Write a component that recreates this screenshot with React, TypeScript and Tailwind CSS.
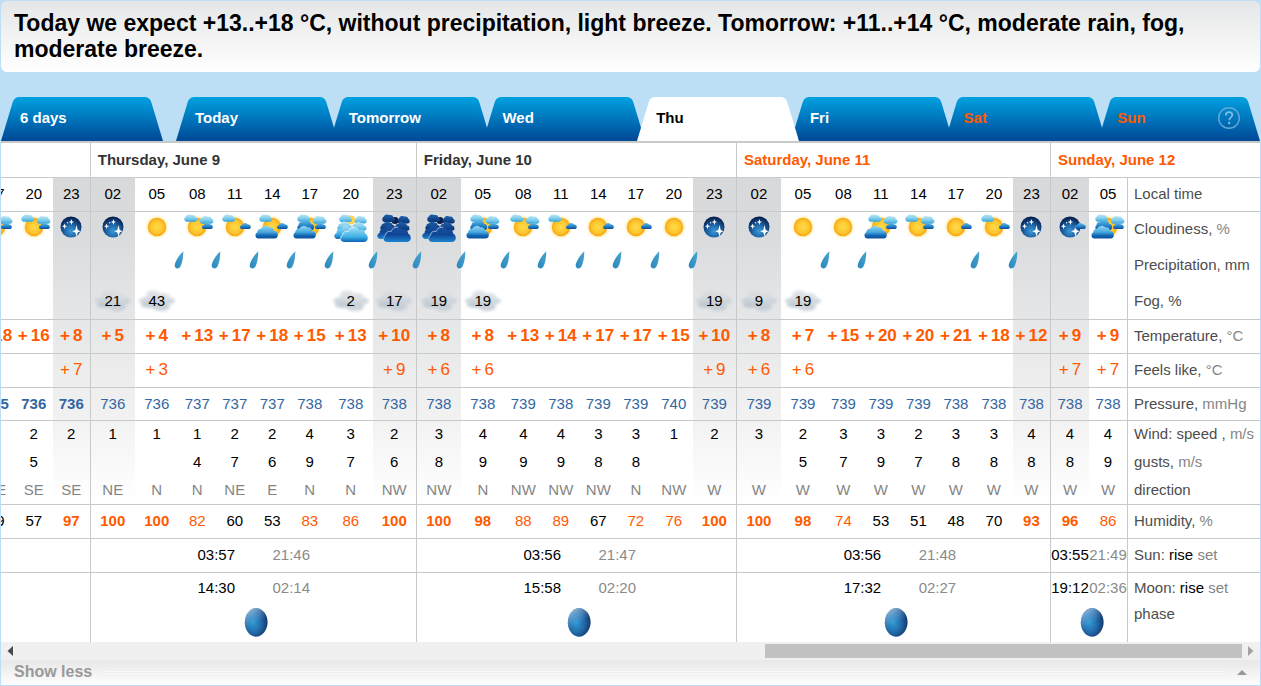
import React from "react";

type Sky =
  | "sun" | "sunD" | "sunLD" | "sunLRD" | "bigLD" | "bigLRD" | "bigAll"
  | "overcast" | "overcastNight" | "night" | "nightD";

type Hour = {
  time: string;
  sky: Sky;
  rain?: boolean;
  fog?: string;
  temp: string;
  feels?: string;
  pressure: string;
  pressureBold?: boolean;
  wind: string;
  gust?: string;
  dir: string;
  hum: string;
  dayStart?: boolean;
};

const h = (
  time: string, sky: Sky, rain: number, fog: string, temp: string, feels: string,
  pressure: string, wind: string, gust: string, dir: string, hum: string, extra: Partial<Hour> = {},
): Hour => ({ time, sky, rain: rain === 1, fog, temp, feels, pressure, wind, gust, dir, hum, ...extra });

const start = { dayStart: true };
const boldPressure = { pressureBold: true };

const hours: Hour[] = [
  h("17", "sunLRD", 0, "", "18", "", "735", "2", "6", "SE", "59", boldPressure),
  h("20", "sunLRD", 0, "", "16", "", "736", "2", "5", "SE", "57", boldPressure),
  h("23", "night", 0, "", "8", "7", "736", "2", "", "SE", "97", boldPressure),
  h("02", "night", 0, "21", "5", "", "736", "1", "", "NE", "100", start),
  h("05", "sun", 0, "43", "4", "3", "736", "1", "", "N", "100"),
  h("08", "sunLRD", 1, "", "13", "", "737", "1", "4", "N", "82"),
  h("11", "sunLD", 1, "", "17", "", "737", "2", "7", "NE", "60"),
  h("14", "bigLD", 1, "", "18", "", "737", "2", "6", "E", "53"),
  h("17", "bigAll", 1, "", "15", "", "738", "4", "9", "N", "83"),
  h("20", "overcast", 1, "2", "13", "", "738", "3", "7", "N", "86"),
  h("23", "overcastNight", 1, "17", "10", "9", "738", "2", "6", "NW", "100"),
  h("02", "overcastNight", 1, "19", "8", "6", "738", "3", "8", "NW", "100", start),
  h("05", "bigAll", 1, "19", "8", "6", "738", "4", "9", "N", "98"),
  h("08", "sunLRD", 1, "", "13", "", "739", "4", "9", "NW", "88"),
  h("11", "sunLD", 1, "", "14", "", "738", "4", "9", "NW", "89"),
  h("14", "sunD", 1, "", "17", "", "739", "3", "8", "NW", "67"),
  h("17", "sunD", 1, "", "17", "", "739", "3", "8", "N", "72"),
  h("20", "sun", 1, "", "15", "", "740", "1", "", "NW", "76"),
  h("23", "night", 1, "19", "10", "9", "739", "2", "", "W", "100"),
  h("02", "night", 0, "9", "8", "6", "739", "3", "", "W", "100", start),
  h("05", "sun", 0, "19", "7", "6", "739", "2", "5", "W", "98"),
  h("08", "sun", 1, "", "15", "", "739", "3", "7", "W", "74"),
  h("11", "bigLRD", 1, "", "20", "", "739", "3", "9", "W", "53"),
  h("14", "sunLRD", 0, "", "20", "", "739", "2", "7", "W", "51"),
  h("17", "sunD", 0, "", "21", "", "738", "3", "8", "W", "48"),
  h("20", "sunLD", 1, "", "18", "", "738", "3", "8", "W", "70"),
  h("23", "night", 1, "", "12", "", "738", "4", "8", "W", "93"),
  h("02", "nightD", 0, "", "9", "7", "738", "4", "8", "W", "96", start),
  h("05", "bigAll", 0, "", "9", "7", "738", "4", "9", "W", "86"),
];

const NIGHT =
  "bg-[linear-gradient(to_bottom,transparent_34px,#d8d9da_34px,#dadbdc_90px,#e6e7e8_180px,#f1f1f1_270px,#ffffff_358px)]";

const colWidths = [
  "w-[37px]", "w-[38px]", "w-[37px]",
  "w-[45px]", "w-[44px]", "w-[37px]", "w-[38px]", "w-[37px]", "w-[38px]", "w-[44px]", "w-[43px]",
  "w-[45px]", "w-[44px]", "w-[37px]", "w-[38px]", "w-[37px]", "w-[38px]", "w-[38px]", "w-[43px]",
  "w-[45px]", "w-[44px]", "w-[37px]", "w-[38px]", "w-[37px]", "w-[38px]", "w-[38px]", "w-[37px]",
  "w-[39px]", "w-[38px]",
];

function Defs() {
  return (
    <svg width="0" height="0" className="absolute" aria-hidden="true">
      <defs>
        <radialGradient id="sun" cx="0.5" cy="0.5" r="0.55">
          <stop offset="0" stopColor="#ffdc4a" />
          <stop offset="0.6" stopColor="#fdc52c" />
          <stop offset="1" stopColor="#f59a12" />
        </radialGradient>
        <radialGradient id="glow">
          <stop offset="0.65" stopColor="#ffe27a" stopOpacity="0.9" />
          <stop offset="1" stopColor="#fff3b8" stopOpacity="0" />
        </radialGradient>
        <radialGradient id="moonNight" cx="0.5" cy="0.7" r="0.65">
          <stop offset="0" stopColor="#3a9ad6" />
          <stop offset="0.5" stopColor="#1d62a4" />
          <stop offset="1" stopColor="#07204f" />
        </radialGradient>
        <linearGradient id="light" x1="0" y1="0" x2="0" y2="1">
          <stop offset="0" stopColor="#b9e6f6" />
          <stop offset="0.55" stopColor="#7fcdec" />
          <stop offset="1" stopColor="#37a5da" />
        </linearGradient>
        <linearGradient id="blue" x1="0" y1="0" x2="0" y2="1">
          <stop offset="0" stopColor="#5eb9e8" />
          <stop offset="0.45" stopColor="#2f8fd0" />
          <stop offset="1" stopColor="#0b4c9e" />
        </linearGradient>
        <linearGradient id="big" x1="0" y1="0" x2="0" y2="1">
          <stop offset="0" stopColor="#8fd6f3" />
          <stop offset="0.5" stopColor="#45a7de" />
          <stop offset="0.75" stopColor="#1468b4" />
          <stop offset="1" stopColor="#0d4f9c" />
        </linearGradient>
        <linearGradient id="overFront" x1="0" y1="0" x2="0" y2="1">
          <stop offset="0" stopColor="#a5e0f7" />
          <stop offset="0.65" stopColor="#3fb0e6" />
          <stop offset="1" stopColor="#0b62b4" />
        </linearGradient>
        <linearGradient id="dark" x1="0" y1="0" x2="0" y2="1">
          <stop offset="0" stopColor="#1a52a0" />
          <stop offset="0.5" stopColor="#0f4594" />
          <stop offset="1" stopColor="#1c84cf" />
        </linearGradient>
        <linearGradient id="darkBack" x1="0" y1="0" x2="0" y2="1">
          <stop offset="0" stopColor="#1c62ae" />
          <stop offset="1" stopColor="#0b3272" />
        </linearGradient>
        <linearGradient id="drop" x1="1" y1="0" x2="0" y2="1">
          <stop offset="0" stopColor="#4aa5d2" />
          <stop offset="1" stopColor="#2b87bd" />
        </linearGradient>
        <linearGradient id="tabBlue" x1="0" y1="0" x2="0" y2="1">
          <stop offset="0" stopColor="#00a2e1" />
          <stop offset="1" stopColor="#004896" />
        </linearGradient>
        <radialGradient id="phase" cx="0.38" cy="0.52" r="0.62">
          <stop offset="0" stopColor="#2b98d4" />
          <stop offset="0.55" stopColor="#2369a8" />
          <stop offset="1" stopColor="#12386f" />
        </radialGradient>
        <linearGradient id="phaseShine" x1="0.1" y1="0" x2="0.4" y2="0.6">
          <stop offset="0" stopColor="#c4e6fb" stopOpacity="0.85" />
          <stop offset="1" stopColor="#7ab4e0" stopOpacity="0" />
        </linearGradient>
        <filter id="soft" x="-20%" y="-40%" width="140%" height="180%">
          <feGaussianBlur stdDeviation="1.6" />
        </filter>
      </defs>
    </svg>
  );
}

const puff = "M3 9 A3.4 3.4 0 0 1 2.6 2.8 A4 3.4 0 0 1 8.8 1.2 A3.6 3 0 0 1 13.2 3.6 A2.8 2.8 0 0 1 12.6 9 Z";
const flat = "M1.8 7 A1.9 1.9 0 0 1 2 3.2 A3.6 3.4 0 0 1 8.4 2.6 A2.4 2.4 0 0 1 10.2 7 Z";
const large =
  "M3 14 A3.2 3.4 0 0 1 2.2 7.6 A3.4 3.4 0 0 1 6 4.2 A5.2 4.8 0 0 1 14.6 2.8 A4 4 0 0 1 19 6.4 A3.6 3.8 0 0 1 19.4 14 Z";
const bank =
  "M-6.5 14 C-11 14 -11.6 8.8 -8.4 7 C-8.2 4 -5.2 2.6 -3 3.6 C-1.4 -1.4 5.6 -2.6 8.4 2 C11.4 0.4 14.4 2.4 14 5.6 C18 7.2 17.6 14 13.4 14 Z";
const bankLeft =
  "M-13.4 11 C-17.4 10.6 -17.8 6.2 -14.4 5 C-14.6 1.6 -11.6 0.4 -9.6 1 C-8.6 -3.2 -2.4 -3.6 -0.6 0 L-4 9 L-9 10.6 Z";

function Sun() {
  return (
    <>
      <circle cx="0" cy="-1" r="12.5" fill="url(#glow)" />
      <circle cx="0" cy="-1" r="9.2" fill="url(#sun)" />
    </>
  );
}

function NightDisc() {
  return (
    <>
      <circle cx="0" cy="-1" r="10.5" fill="url(#moonNight)" />
      <path
        d="M5.5 -3 L6.7 2 L9.6 3.2 L6.7 4.4 L5.5 8.6 L4.3 4.4 L1.2 3.2 L4.3 2 Z M-6.5 -4.6 L-5.8 -2.4 L-3.8 -1.7 L-5.8 -1 L-6.5 1.2 L-7.2 -1 L-9 -1.7 L-7.2 -2.4 Z M0.4 -9 L1.1 -6.7 L3 -6 L1.1 -5.3 L0.4 -3 L-0.3 -5.3 L-2.2 -6 L-0.3 -6.7 Z"
        fill="#fff"
      />
      <circle cx="-3.4" cy="-5.2" r="0.8" fill="#d7ecff" />
    </>
  );
}

function Overcast({ dark }: { dark?: boolean }) {
  const back = dark ? "url(#darkBack)" : "url(#light)";
  const front = dark ? "url(#dark)" : "url(#overFront)";
  const edge = dark ? "#a9c4e4" : "#e6f7fd";
  return (
    <>
      {dark ? <circle cx="1" cy="-7.5" r="3.5" fill="#0a1f4c" /> : <circle cx="0" cy="-8" r="4.5" fill="#ffd34d" />}
      <path d={puff} transform="translate(-12.5 -14) scale(0.9)" fill={back} />
      <path d={puff} transform="translate(3 -12.5) scale(0.85 0.9)" fill={back} />
      <path d={large} transform="translate(-14 -7.5) scale(0.66 0.7)" fill={back} />
      <path d={large} transform="translate(0 -7) scale(0.68 0.7)" fill={back} />
      <path d={bankLeft} fill={front} />
      <path d={bank} fill={front} />
      <path
        d="M-10 10.4 C-10.2 8.8 -9.6 7.6 -8.4 7 C-8.2 4 -5.2 2.6 -3 3.6 C-1.6 0 1.4 -1 4 -0.8"
        fill="none"
        stroke={edge}
        strokeWidth="0.9"
      />
    </>
  );
}

function SkyIcon({ sky }: { sky: Sky }) {
  const left = ["sunLD", "sunLRD", "bigLD", "bigLRD", "bigAll"].includes(sky);
  const right = ["sunLRD", "bigLRD", "bigAll"].includes(sky);
  const big = sky.startsWith("big");
  const dusk = ["sunD", "sunLD", "sunLRD", "nightD"].includes(sky) || big;
  const overcast = sky.startsWith("overcast");
  return (
    <svg viewBox="-18 -15 36 32" className="mx-auto block h-8 w-9 overflow-visible" role="img" aria-label={sky}>
      {overcast ? (
        <Overcast dark={sky === "overcastNight"} />
      ) : (
        <>
          {sky.startsWith("night") ? <NightDisc /> : <Sun />}
          {left && <path d={puff} transform="translate(-13.5 -14) scale(0.92 0.85)" fill="url(#light)" />}
          {right && <path d={puff} transform="translate(2 -12.4) scale(0.96 0.9)" fill="url(#light)" />}
          {sky === "bigAll" && <path d={large} transform="translate(-13 -9) scale(0.75 0.8)" fill="url(#blue)" />}
          {dusk && <path d={flat} transform="translate(5 -6) scale(0.95 1)" fill="url(#blue)" />}
          {big && <path d={large} transform="translate(-17 -3.4)" fill="url(#big)" />}
        </>
      )}
    </svg>
  );
}

function Drop() {
  return (
    <svg viewBox="0 0 10 18" className="absolute top-[5px] -left-[5px] z-10 h-[18px] w-2.5" role="img" aria-label="rain">
      <path d="M9.2 0.3 C9.4 5 8.6 11.5 6.6 15.2 C5.2 17.8 1.6 18.3 0.8 15.6 C0 12.4 4.6 4.6 9.2 0.3 Z" fill="url(#drop)" />
    </svg>
  );
}

function Fog() {
  return (
    <svg viewBox="0 0 38 26" className="absolute inset-x-0 top-1 mx-auto h-[26px] w-[38px] overflow-visible" aria-hidden="true">
      <g filter="url(#soft)" opacity="0.85">
        <ellipse cx="19" cy="13" rx="18" ry="5" fill="#c8d0d7" />
        <ellipse cx="15" cy="7" rx="7" ry="4.5" fill="#d6dbe0" />
        <ellipse cx="25" cy="9" rx="7" ry="4" fill="#d6dbe0" />
        <ellipse cx="11" cy="17" rx="8" ry="3" fill="#bac5ce" />
        <ellipse cx="23" cy="19" rx="9" ry="4" fill="#c2cbd3" />
      </g>
    </svg>
  );
}

function Moon() {
  const shape = "M17.5 1 C25 1.2 29.6 8 29.6 15.2 C29.6 22.6 24.6 29.6 17.8 29.8 C11 29 6.8 22.6 6.8 15.4 C6.8 8.2 11.4 1.6 17.5 1 Z";
  return (
    <svg viewBox="0 0 30 31" className="mx-auto block h-[31px] w-[30px]" role="img" aria-label="waxing moon">
      <path d={shape} fill="url(#phase)" />
      <path d={shape} fill="url(#phaseShine)" />
    </svg>
  );
}

const tabs = [
  { name: "Today", tone: "text-white" },
  { name: "Tomorrow", tone: "text-white" },
  { name: "Wed", tone: "text-white" },
  { name: "Thu", tone: "text-black", active: true },
  { name: "Fri", tone: "text-white" },
  { name: "Sat", tone: "text-[#ff5a00]" },
  { name: "Sun", tone: "text-[#ff5a00]", help: true },
];

function Tab({ name, tone, active, help, size }: { name: string; tone: string; active?: boolean; help?: boolean; size: string }) {
  const fill = active ? "#fff" : "url(#tabBlue)";
  const middle = active ? "bg-white" : "bg-linear-to-b from-[#00a2e1] to-[#004896]";
  return (
    <button type="button" role="tab" aria-selected={!!active} className={`${size} ${tone} ${active ? "relative z-10" : ""} flex h-11 text-left text-[15px] leading-5 font-bold`}>
      <svg viewBox="0 0 19 44" className="h-11 w-[19px] shrink-0" aria-hidden="true">
        <path d="M0 44 L11.6 5.5 C13 1.2 15.6 0 19 0 L19 44 Z" fill={fill} />
      </svg>
      <span className={`${middle} flex h-11 flex-1 items-center justify-between pb-0.5`}>
        {name}
        {help && (
          <svg viewBox="0 0 24 24" className="size-6" role="img" aria-label="help">
            <circle cx="12" cy="12" r="10.3" fill="none" stroke="#62a9d6" strokeWidth="1.4" />
            <path d="M8.9 9.4 C8.9 7.3 10.2 6.2 12.1 6.2 C14 6.2 15.3 7.3 15.3 9 C15.3 11.4 12.2 11.5 12.2 14.2" fill="none" stroke="#7dbbe2" strokeWidth="1.8" />
            <circle cx="12.2" cy="17" r="1.2" fill="#7dbbe2" />
          </svg>
        )}
      </span>
      <svg viewBox="0 0 19 44" className="h-11 w-[19px] shrink-0" aria-hidden="true">
        <path d="M19 44 L7.4 5.5 C6 1.2 3.4 0 0 0 L0 44 Z" fill={fill} />
      </svg>
    </button>
  );
}

const LINE = "border-t border-t-[#c8c9ca]";
const side = (on?: boolean) => (on ? "border-l border-l-[#c8c9ca]" : "");

function Label({ children, height, line = true }: { children: React.ReactNode; height: string; line?: boolean }) {
  return (
    <th scope="row" className={`${height} ${line ? LINE : ""} border-l border-l-[#c8c9ca] p-0 pb-px pl-1.5 text-left font-normal whitespace-nowrap text-[#4d4d4d]`}>
      {children}
    </th>
  );
}

function Row({ label, height, line = true, tone = "text-black", cell }: {
  label: React.ReactNode;
  height: string;
  line?: boolean;
  tone?: string;
  cell: (hour: Hour) => React.ReactNode;
}) {
  return (
    <tr>
      {hours.map((hour, i) => (
        <td key={i} className={`${height} ${line ? LINE : ""} ${side(hour.dayStart)} ${tone} relative p-0 pb-px text-center align-middle whitespace-nowrap`}>
          {cell(hour)}
        </td>
      ))}
      <Label height={height} line={line}>{label}</Label>
    </tr>
  );
}

const Unit = ({ children }: { children: React.ReactNode }) => <span className="text-[#858585]">{children}</span>;

function Degrees({ value, bold }: { value?: string; bold?: boolean }) {
  if (!value) return null;
  return (
    <span className={`flex justify-center gap-[3px] text-[17px] text-[#ff5a00] ${bold ? "font-bold" : ""}`}>
      <span>+</span>
      <span>{value}</span>
    </span>
  );
}

function humidityTone(value: string) {
  const n = Number(value);
  if (n > 89) return "font-bold text-[#ff5a00]";
  return n > 70 ? "text-[#ff5a00]" : "text-black";
}

const days = [
  { date: "Thursday, June 9", sun: ["03:57", "21:46"], moon: ["14:30", "02:14"], tone: "text-[#333]" },
  { date: "Friday, June 10", sun: ["03:56", "21:47"], moon: ["15:58", "02:20"], tone: "text-[#333]" },
  { date: "Saturday, June 11", sun: ["03:56", "21:48"], moon: ["17:32", "02:27"], tone: "text-[#ff5a00]" },
];

function RiseSet({ kind, label, height }: { kind: "sun" | "moon"; label: React.ReactNode; height: string }) {
  const cell = `${height} ${LINE} p-0 pb-px text-center`;
  const last = kind === "sun" ? ["03:55", "21:49"] : ["19:12", "02:36"];
  return (
    <tr>
      <td colSpan={3} className={cell} />
      {days.map((day) => (
        <React.Fragment key={day.date}>
          <td colSpan={2} className={`${cell} ${side(true)}`} />
          <td colSpan={2} className={`${cell} text-black`}>{day[kind][0]}</td>
          <td colSpan={2} className={`${cell} text-[#8a8a8a]`}>{day[kind][1]}</td>
          <td colSpan={2} className={cell} />
        </React.Fragment>
      ))}
      <td className={`${cell} ${side(true)} text-black`}>{last[0]}</td>
      <td className={`${cell} text-[#8a8a8a]`}>{last[1]}</td>
      <Label height={height}>{label}</Label>
    </tr>
  );
}

function Forecast() {
  const riseSet = (name: string) => (
    <>
      {name}: <span className="text-black">rise</span> <Unit>set</Unit>
    </>
  );
  return (
    <div className="flex justify-end overflow-hidden bg-white">
      <table className="w-full min-w-[1282px] table-fixed border-separate border-spacing-0 text-[15px] leading-5">
        <colgroup>
          {hours.map((hour, i) => (
            <col key={i} className={`${colWidths[i]} ${hour.time === "23" || hour.time === "02" ? NIGHT : ""}`} />
          ))}
          <col className="w-[133px]" />
        </colgroup>
        <tbody>
          <tr>
            <td colSpan={3} className="h-[34px] p-0" />
            {days.map((day) => (
              <th key={day.date} scope="colgroup" colSpan={8} className={`h-[34px] border-l border-l-[#c8c9ca] p-0 pl-[7px] text-left font-bold ${day.tone}`}>
                {day.date}
              </th>
            ))}
            <th scope="colgroup" colSpan={3} className="h-[34px] border-l border-l-[#c8c9ca] p-0 pl-[7px] text-left font-bold text-[#ff5a00]">
              Sunday, June 12
            </th>
          </tr>
          <Row height="h-[34px]" label="Local time" cell={(x) => x.time} />
          <Row height="h-[35px]" label={<>Cloudiness, <Unit>%</Unit></>} cell={(x) => <SkyIcon sky={x.sky} />} />
          <Row height="h-[38px]" line={false} label="Precipitation, mm" cell={(x) => (x.rain ? <Drop /> : null)} />
          <Row height="h-[35px]" line={false} label="Fog, %" cell={(x) => (x.fog ? <><Fog /><span className="relative">{x.fog}</span></> : null)} />
          <Row height="h-[34px]" label={<>Temperature, <Unit>°C</Unit></>} cell={(x) => <Degrees value={x.temp} bold />} />
          <Row height="h-[34px]" label={<>Feels like, <Unit>°C</Unit></>} cell={(x) => <Degrees value={x.feels} />} />
          <Row height="h-[33px]" tone="text-[#3366a3]" label={<>Pressure, <Unit>mmHg</Unit></>} cell={(x) => <span className={x.pressureBold ? "font-bold" : ""}>{x.pressure}</span>} />
          <Row height="h-7" label={<>Wind: speed , <Unit>m/s</Unit></>} cell={(x) => x.wind} />
          <Row height="h-7" line={false} label={<>gusts, <Unit>m/s</Unit></>} cell={(x) => x.gust} />
          <Row height="h-7" line={false} tone="text-[#858585]" label="direction" cell={(x) => x.dir} />
          <Row height="h-[34px]" label={<>Humidity, <Unit>%</Unit></>} cell={(x) => <span className={humidityTone(x.hum)}>{x.hum}</span>} />
          <RiseSet kind="sun" height="h-[34px]" label={riseSet("Sun")} />
          <RiseSet kind="moon" height="h-8" label={riseSet("Moon")} />
          <tr>
            <td colSpan={3} className="h-[38px] p-0" />
            {days.map((day) => (
              <td key={day.date} colSpan={8} className={`h-[38px] p-0 pb-0.5 ${side(true)}`}>
                <Moon />
              </td>
            ))}
            <td colSpan={2} className={`h-[38px] p-0 pb-0.5 ${side(true)}`}>
              <Moon />
            </td>
            <th scope="row" className="h-[38px] border-l border-l-[#c8c9ca] p-0 pl-1.5 text-left align-top font-normal text-[#4d4d4d]">phase</th>
          </tr>
        </tbody>
      </table>
    </div>
  );
}

export default function App() {
  return (
    <div className="bg-[#bcdff5] p-px font-['Liberation_Sans',Arial,sans-serif]">
      <Defs />
      <header className="rounded-md bg-linear-to-b from-[#e5e6e7] to-white px-[13px] pt-[9px] pb-[10px]">
        <h1 className="text-[23px] leading-[26px] font-bold text-black">
          Today we expect +13..+18 °C, without precipitation, light breeze. Tomorrow: +11..+14 °C, moderate rain, fog, moderate breeze.
        </h1>
      </header>
      <div role="tablist" className="flex border-b-2 border-[#c8c9ca] pt-[25px]">
        <Tab name="6 days" tone="text-white" size="mr-[13px] w-[162px] shrink-0" />
        {tabs.map((tab, i) => (
          <Tab key={tab.name} {...tab} size={i < tabs.length - 1 ? "flex-1 -mr-2" : "flex-1"} />
        ))}
      </div>
      <Forecast />
      <div className="flex h-[18px] items-center bg-[#f0f0f0]">
        <button type="button" aria-label="Scroll left" className="flex h-full w-[17px] items-center justify-center">
          <svg viewBox="0 0 6 10" className="h-2.5 w-1.5"><path d="M6 0 V10 L0.5 5 Z" fill="#4a4a4a" /></svg>
        </button>
        <div className="flex flex-1 justify-end">
          <div className="h-3.5 w-[39%] bg-[#c1c1c1]" />
        </div>
        <button type="button" aria-label="Scroll right" className="flex h-full w-[18px] items-center justify-center">
          <svg viewBox="0 0 6 10" className="h-2.5 w-1.5"><path d="M0 0 V10 L5.5 5 Z" fill="#a3a3a3" /></svg>
        </button>
      </div>
      <button type="button" className="flex h-[25px] w-full items-center gap-[13px] bg-linear-to-b from-[#e8e8e9] to-[#fdfdfd] pr-[13px] pb-px pl-[13px] text-base leading-5 font-bold text-[#999]">
        <span>Show less</span>
        <span className="h-[3px] flex-1 border-y border-white/70 bg-[#ededed]" />
        <svg viewBox="0 0 10 5" className="h-[5px] w-2.5"><path d="M5 0 L10 5 H0 Z" fill="#999" /></svg>
      </button>
    </div>
  );
}
